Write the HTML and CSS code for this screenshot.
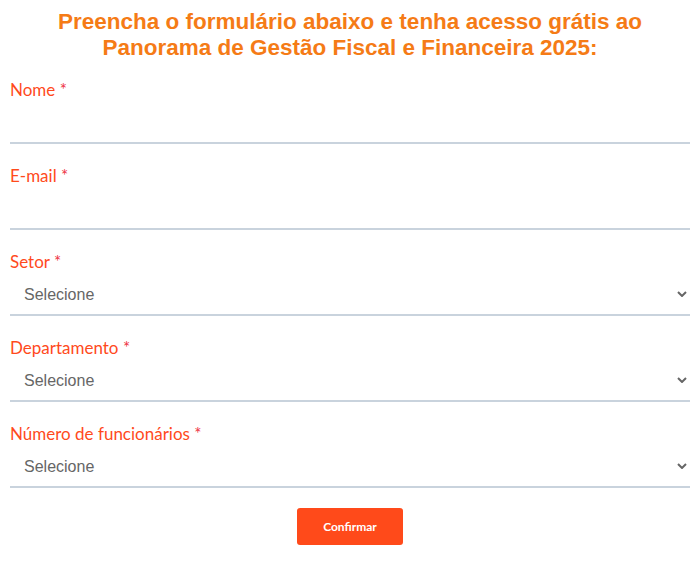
FILE: index.html
```html
<!DOCTYPE html>
<html lang="pt-BR">
<head>
<meta charset="utf-8">
<title>Panorama de Gestão Fiscal e Financeira 2025</title>
<link rel="stylesheet" href="styles.css">
</head>
<body>
<div class="page">
  <h1 class="title">Preencha o formulário abaixo e tenha acesso grátis ao Panorama de Gestão Fiscal e Financeira 2025:</h1>
  <form class="form">
    <div class="field">
      <label class="label" for="nome">Nome <span class="req">*</span></label>
      <input class="control" id="nome" type="text">
    </div>
    <div class="field">
      <label class="label" for="email">E-mail <span class="req">*</span></label>
      <input class="control" id="email" type="email">
    </div>
    <div class="field">
      <label class="label" for="setor">Setor <span class="req">*</span></label>
      <select class="control select" id="setor"><option>Selecione</option></select>
    </div>
    <div class="field">
      <label class="label" for="dep">Departamento <span class="req">*</span></label>
      <select class="control select" id="dep"><option>Selecione</option></select>
    </div>
    <div class="field">
      <label class="label" for="func">Número de funcionários <span class="req">*</span></label>
      <select class="control select" id="func"><option>Selecione</option></select>
    </div>
    <div class="actions">
      <button class="btn" type="button">Confirmar</button>
    </div>
  </form>
</div>
</body>
</html>
```
FILE: styles.css
```css
* { box-sizing: border-box; }
html, body { margin: 0; padding: 0; background: #fff; }
.page {
  padding: 9px 10px 0;
}
.title {
  margin: 0 0 17px;
  text-align: center;
  font-family: "Liberation Sans", Arial, sans-serif;
  font-weight: bold;
  font-size: 22.5px;
  line-height: 26px;
  color: #f57b16;
  padding: 0 20px;
}
.form {
  display: flex;
  flex-direction: column;
  gap: 20px;
}
.field {
  display: flex;
  flex-direction: column;
}
.label {
  display: block;
  height: 24px;
  font-family: Lato, "Noto Sans", sans-serif;
  font-size: 17px;
  line-height: 24px;
  color: #ff4a1c;
}
.req {
  color: #ee3545;
}
.control {
  display: block;
  width: 100%;
  height: 42px;
  margin: 0;
  border: 0;
  border-bottom: 2px solid #c9d3dd;
  border-radius: 0;
  background: transparent;
  outline: none;
  font-family: "Liberation Sans", Arial, sans-serif;
  font-size: 16px;
  color: #666;
  padding: 0 14px;
}
.select {
  -webkit-appearance: none;
  appearance: none;
  padding: 0 20px 0 14px;
  background-image: url("data:image/svg+xml;utf8,<svg xmlns='http://www.w3.org/2000/svg' width='10' height='6' viewBox='0 0 10 6'><path d='M1 1l4 4 4-4' fill='none' stroke='%23666' stroke-width='2'/></svg>");
  background-repeat: no-repeat;
  background-position: right 3px center;
  background-size: 10px 6px;
}
.actions {
  display: flex;
  justify-content: center;
}
.btn {
  width: 106px;
  height: 37px;
  border: 0;
  border-radius: 3px;
  background: #ff4a1a;
  color: #fff;
  font-family: Lato, "Noto Sans", sans-serif;
  font-weight: bold;
  font-size: 12px;
  cursor: pointer;
}
```
